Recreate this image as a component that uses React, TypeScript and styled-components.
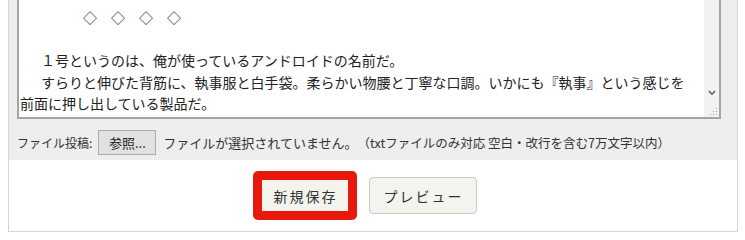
import React from 'react';
import styled, { createGlobalStyle } from 'styled-components';

const GlobalStyle = createGlobalStyle`
  html, body {
    margin: 0;
    padding: 0;
    background: #ffffff;
    overflow: hidden;
  }
  body {
    font-family: 'Noto Sans CJK JP', 'Noto Sans', sans-serif;
    color: #222;
  }
`;

const JP = `'Noto Sans CJK JP', 'Noto Sans', sans-serif`;

const bodyText = [
  '',
  '',
  '\u3000\u3000\u3000\u3000\u2002◇\u3000◇\u3000◇\u3000◇',
  '',
  '\u3000\u2002１号というのは、俺が使っているアンドロイドの名前だ。',
  '\u3000\u2002すらりと伸びた背筋に、執事服と白手袋。柔らかい物腰と丁寧な口調。いかにも『執事』という感じを',
  '前面に押し出している製品だ。',
].join('\n');

const App: React.FC = () => {
  return (
    <>
      <GlobalStyle />
      <Panel>
        <EditorSection>
          <EditorBox>
            <BodyArea defaultValue={bodyText} spellCheck={false} />
            <ScrollTrack>
              <ArrowButton>
                <svg width="8" height="6" viewBox="0 0 8 6">
                  <path d="M1 1 L4 4.2 L7 1" fill="none" stroke="#606060" strokeWidth="1.6" />
                </svg>
              </ArrowButton>
              <Grip>
                <svg width="10" height="10" viewBox="0 0 10 10">
                  <rect x="8" y="2" width="1" height="1" fill="#a0a0a0" />
                  <rect x="5" y="5" width="1" height="1" fill="#a0a0a0" />
                  <rect x="8" y="5" width="1" height="1" fill="#a0a0a0" />
                  <rect x="2" y="8" width="1" height="1" fill="#a0a0a0" />
                  <rect x="5" y="8" width="1" height="1" fill="#a0a0a0" />
                  <rect x="8" y="8" width="1" height="1" fill="#a0a0a0" />
                </svg>
              </Grip>
            </ScrollTrack>
          </EditorBox>
        </EditorSection>

        <FileRow>
          <FileLabel>ファイル投稿:</FileLabel>
          <FileButton type="button">参照...</FileButton>
          <FileStatus>ファイルが選択されていません。</FileStatus>
          <FileNote>（txtファイルのみ対応 空白・改行を含む7万文字以内）</FileNote>
        </FileRow>

        <Actions>
          <Highlight>
            <ActionButton type="button" $compact>
              新規保存
            </ActionButton>
          </Highlight>
          <ActionButton type="button">プレビュー</ActionButton>
        </Actions>
      </Panel>
    </>
  );
};

export default App;

const Panel = styled.div`
  box-sizing: border-box;
  width: 730px;
  margin: -47px 0 0 8px;
  border: 1px solid #d4d4d4;
  background: #eeeeee;
  display: flex;
  flex-direction: column;
`;

const EditorSection = styled.div`
  padding: 8px 16px 0 8px;
`;

const EditorBox = styled.div`
  display: flex;
  border: 2px solid #a4a4a4;
  background: #ffffff;
`;

const BodyArea = styled.textarea`
  flex: 1;
  box-sizing: border-box;
  height: 153px;
  margin: 0;
  padding: 0 0 2.5px 1px;
  border: none;
  outline: none;
  resize: none;
  overflow: hidden;
  background: #ffffff;
  color: #222;
  font-family: ${JP};
  font-size: 14px;
  line-height: 21.5px;
  white-space: pre;
`;

const ScrollTrack = styled.div`
  width: 15px;
  background: #f2f2f2;
  display: flex;
  flex-direction: column;
  justify-content: flex-end;
`;

const ArrowButton = styled.div`
  height: 17px;
  display: flex;
  align-items: center;
  justify-content: center;
`;

const Grip = styled.div`
  height: 15px;
  display: flex;
  align-items: flex-end;
  justify-content: flex-end;
  padding: 0 1px 1px 0;
`;

const FileRow = styled.div`
  display: flex;
  align-items: center;
  padding: 11px 8px 5px 8px;
  font-family: ${JP};
  color: #333;
  white-space: nowrap;
`;

const FileLabel = styled.span`
  font-size: 12px;
  margin-right: 6px;
`;

const FileButton = styled.button`
  box-sizing: border-box;
  width: 58px;
  height: 25px;
  padding: 0;
  border: 1px solid #adadad;
  background: #e1e1e1;
  color: #222;
  font-family: ${JP};
  font-size: 13px;
`;

const FileStatus = styled.span`
  margin-left: 7px;
  font-size: 13px;
`;

const FileNote = styled.span`
  font-size: 12.5px;
`;

const Actions = styled.div`
  height: 71px;
  background: #ffffff;
  display: flex;
  align-items: center;
  justify-content: center;
  gap: 12px;
  padding-right: 17px;
`;

const Highlight = styled.div`
  border: 9px solid #e8180c;
  border-radius: 5px;
  display: flex;
`;

const ActionButton = styled.button<{ $compact?: boolean }>`
  box-sizing: border-box;
  width: ${(p) => (p.$compact ? '86px' : '108px')};
  height: ${(p) => (p.$compact ? '31px' : '37px')};
  padding: 0 0 0 2px;
  border: ${(p) => (p.$compact ? 'none' : '1px solid #c9c9c9')};
  border-radius: ${(p) => (p.$compact ? '0' : '4px')};
  background: #f5f3ed;
  color: #333;
  font-family: ${JP};
  font-size: 14px;
  letter-spacing: 2px;
`;
